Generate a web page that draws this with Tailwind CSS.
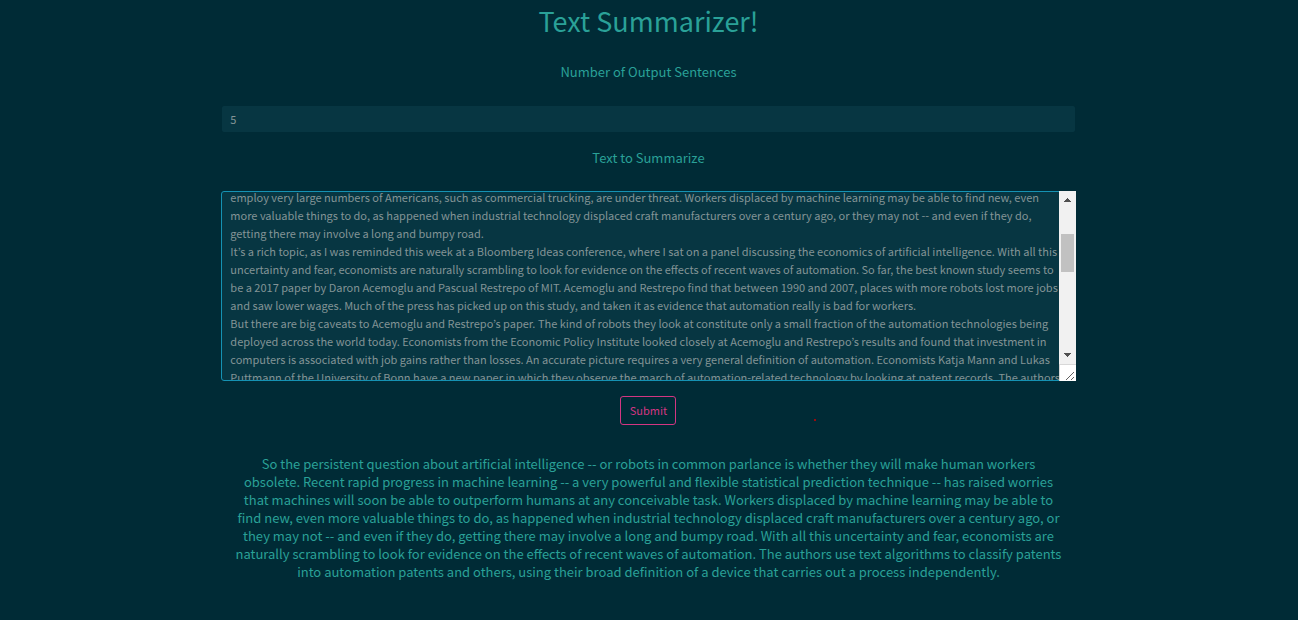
<!DOCTYPE html>
<html lang="en">
<head>
<meta charset="utf-8">
<meta name="viewport" content="width=device-width, initial-scale=1">
<title>Text Summarizer!</title>
<script src="https://cdn.jsdelivr.net/npm/@tailwindcss/browser@4"></script>
</head>
<body class="min-h-screen bg-[#002b36] font-['Noto_Sans_CJK_KR',sans-serif] text-[13px] leading-[18px] text-[#2aa198]">
<main class="mx-auto w-2/3 pr-1.5 pl-[5px] text-center">
  <h1 class="pt-[3px] text-[27px] leading-9">Text Summarizer!</h1>
  <form class="flex flex-col items-center" onsubmit="return false">
    <label for="count" class="mt-6">Number of Output Sentences</label>
    <input id="count" type="text" value="5" class="mt-6 h-7 w-full rounded-[3px] border border-[#002b36] bg-[#073642] px-2 text-[11px] text-[#839496] outline-none">
    <label for="source" class="mt-4">Text to Summarize</label>
    <div class="mt-6 flex h-[190px] w-full rounded-[3px] border border-[#1592b3] bg-[#073642]">
      <textarea id="source" wrap="off" class="min-w-0 flex-1 resize-none overflow-hidden pl-2 text-[11px] leading-[18px] text-[#839496] outline-none">employ very large numbers of Americans, such as commercial trucking, are under threat. Workers displaced by machine learning may be able to find new, even
more valuable things to do, as happened when industrial technology displaced craft manufacturers over a century ago, or they may not -- and even if they do,
getting there may involve a long and bumpy road.
It’s a rich topic, as I was reminded this week at a Bloomberg Ideas conference, where I sat on a panel discussing the economics of artificial intelligence. With all this
uncertainty and fear, economists are naturally scrambling to look for evidence on the effects of recent waves of automation. So far, the best known study seems to
be a 2017 paper by Daron Acemoglu and Pascual Restrepo of MIT. Acemoglu and Restrepo find that between 1990 and 2007, places with more robots lost more jobs
and saw lower wages. Much of the press has picked up on this study, and taken it as evidence that automation really is bad for workers.
But there are big caveats to Acemoglu and Restrepo’s paper. The kind of robots they look at constitute only a small fraction of the automation technologies being
deployed across the world today. Economists from the Economic Policy Institute looked closely at Acemoglu and Restrepo’s results and found that investment in
computers is associated with job gains rather than losses. An accurate picture requires a very general definition of automation. Economists Katja Mann and Lukas
Puttmann of the University of Bonn have a new paper in which they observe the march of automation-related technology by looking at patent records. The authors</textarea>
      <div class="-my-px -mr-px flex w-[17px] flex-col items-center bg-[#f1f1f1]" aria-hidden="true">
        <svg class="h-[17px] w-[17px]" viewBox="0 0 17 17" shape-rendering="crispEdges" fill="#505050"><path d="M8 7h1v1h1v1h1v1h1v1H5v-1h1V9h1V8h1z"/></svg>
        <div class="mt-[26px] h-[38px] w-[13px] bg-[#c1c1c1]"></div>
        <svg class="mt-auto h-[17px] w-[17px]" viewBox="0 0 17 17" shape-rendering="crispEdges" fill="#505050"><path d="M5 6h7v1h-1v1h-1v1H9v1H8V9H7V8H6V7H5z"/></svg>
        <svg class="h-[17px] w-[17px] bg-white" viewBox="0 0 17 17" shape-rendering="crispEdges" stroke="#606060"><path d="M7 16 15 8M12 16l3-3" /><path stroke="#d8d8d8" d="M0 .5h17M.5 0v17"/></svg>
      </div>
    </div>
    <div class="relative mt-[15px] flex">
      <button type="submit" class="h-[29px] w-14 rounded-[3px] border border-[#d33682] pb-px text-[11px] leading-[18px] text-[#d33682]">Submit</button>
      <span class="absolute top-[23px] left-[194px] size-0.5 rounded-full bg-[#d00000]"></span>
    </div>
  </form>
  <p class="mt-[30px] whitespace-nowrap">So the persistent question about artificial intelligence -- or robots in common parlance is whether they will make human workers<br>obsolete. Recent rapid progress in machine learning -- a very powerful and flexible statistical prediction technique -- has raised worries<br>that machines will soon be able to outperform humans at any conceivable task. Workers displaced by machine learning may be able to<br>find new, even more valuable things to do, as happened when industrial technology displaced craft manufacturers over a century ago, or<br>they may not -- and even if they do, getting there may involve a long and bumpy road. With all this uncertainty and fear, economists are<br>naturally scrambling to look for evidence on the effects of recent waves of automation. The authors use text algorithms to classify patents<br>into automation patents and others, using their broad definition of a device that carries out a process independently.</p>
</main>
<script>document.getElementById('source').scrollTop = 4;</script>
</body>
</html>
